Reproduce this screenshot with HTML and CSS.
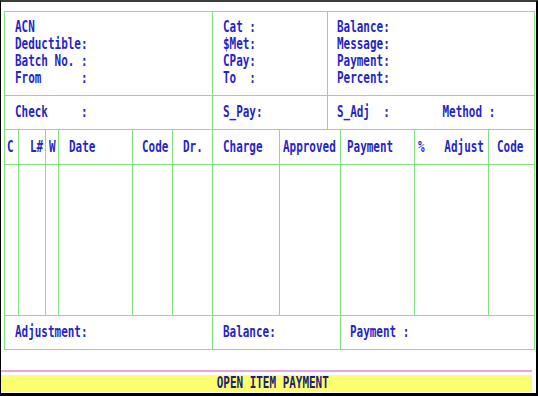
FILE: index.html
```html
<!DOCTYPE html>
<html lang="en">
<head>
    <meta charset="UTF-8">
    <meta name="viewport" content="width=device-width, initial-scale=1.0">
    <title>Open Item Payment</title>
    <link rel="stylesheet" href="styles.css">
</head>
<body>
    <div class="screen">
        <div class="form">
            <div class="head">
                <div class="fields">
                    <span class="t">ACN</span>
                    <span class="t">Deductible:</span>
                    <span class="t">Batch No. :</span>
                    <span class="t">From      :</span>
                </div>
                <div class="fields mid bl">
                    <span class="t">Cat :</span>
                    <span class="t">$Met:</span>
                    <span class="t">CPay:</span>
                    <span class="t">To  :</span>
                </div>
                <div class="fields right bl">
                    <span class="t">Balance:</span>
                    <span class="t">Message:</span>
                    <span class="t">Payment:</span>
                    <span class="t">Percent:</span>
                </div>
                <div class="line bt"><span class="t">Check     :</span></div>
                <div class="line mid bl bt"><span class="t">S_Pay:</span></div>
                <div class="line right bl bt"><span class="t">S_Adj  :        Method :</span></div>
            </div>

            <div class="table">
                <div class="th"><span class="t">C</span></div>
                <div class="th bl"><span class="t">L#</span></div>
                <div class="th bl"><span class="t">W</span></div>
                <div class="th bl"><span class="t">Date</span></div>
                <div class="th bl"><span class="t">Code</span></div>
                <div class="th bl"><span class="t">Dr.</span></div>
                <div class="th bl"><span class="t">Charge</span></div>
                <div class="th bl"><span class="t">Approved</span></div>
                <div class="th bl"><span class="t">Payment</span></div>
                <div class="th bl"><span class="t">%   Adjust</span></div>
                <div class="th bl"><span class="t">Code</span></div>

                <div class="td"></div>
                <div class="td bl"></div>
                <div class="td bl"></div>
                <div class="td bl"></div>
                <div class="td bl"></div>
                <div class="td bl"></div>
                <div class="td bl"></div>
                <div class="td bl"></div>
                <div class="td bl"></div>
                <div class="td bl"></div>
                <div class="td bl"></div>
            </div>

            <div class="totals">
                <div class="line"><span class="t">Adjustment:</span></div>
                <div class="line mid bl"><span class="t">Balance:</span></div>
                <div class="line pay bl"><span class="t">Payment :</span></div>
            </div>
        </div>

        <div class="rule"></div>
        <div class="title"><span class="t">OPEN ITEM PAYMENT</span></div>
    </div>
</body>
</html>
```

FILE: styles.css
```css
* {
    box-sizing: border-box;
}
body {
    margin: 0;
    background-color: white;
    font-family: "DejaVu Sans Mono", "Liberation Mono", monospace;
    font-weight: bold;
    font-size: 15px;
    line-height: 17px;
    color: #2626c6;
}
.screen {
    width: 538px;
    height: 396px;
    border-top: 2px solid #3c3c3c;
    border-left: 1px solid #000;
    border-right: 2px solid #000;
    border-bottom: 3px solid #000;
    padding-top: 9px;
}
.form {
    width: 531px;
    margin: 0 1px 0 3px;
    border: 1px solid #84e484;
}
.t {
    display: inline-block;
    white-space: pre;
    transform: scaleX(.73);
    transform-origin: 0 50%;
}
.bl { border-left: 1px solid #84e484; }
.bt { border-top: 1px solid #84e484; }

.head {
    display: grid;
    grid-template-columns: 207px 115px 207px;
    grid-template-rows: 83px 34px;
}
.fields {
    display: flex;
    flex-direction: column;
    padding: 7px 0 0 10px;
}
.fields .t {
    width: max-content;
}
.line {
    display: flex;
    align-items: center;
    padding-left: 10px;
}
.mid { padding-left: 10px; }
.right { padding-left: 9px; }

.table {
    display: grid;
    grid-template-columns: 13px 27px 13px 74px 40px 40px 67px 61px 74px 74px 46px;
    grid-template-rows: 34px 151px;
    border-top: 1px solid #84e484;
}
.th {
    display: flex;
    align-items: center;
    white-space: nowrap;
}
.th:nth-child(1) { padding-left: 2px; }
.th:nth-child(2) { padding-left: 11px; }
.th:nth-child(3) { padding-left: 3px; }
.th:nth-child(4) { padding-left: 10px; }
.th:nth-child(5) { padding-left: 9px; }
.th:nth-child(6) { padding-left: 10px; }
.th:nth-child(7) { padding-left: 10px; }
.th:nth-child(8) { padding-left: 3px; }
.th:nth-child(9) { padding-left: 6px; }
.th:nth-child(10) { padding-left: 3px; }
.th:nth-child(11) { padding-left: 8px; }
.td {
    border-top: 1px solid #84e484;
}

.totals {
    display: grid;
    grid-template-columns: 207px 128px 194px;
    height: 34px;
    border-top: 1px solid #84e484;
}
.pay { padding-left: 9px; }

.rule {
    width: 531px;
    height: 2px;
    margin-top: 20px;
    background-color: #dfa9e6;
}
.title {
    width: 531px;
    height: 17px;
    margin-top: 3px;
    padding-left: 13px;
    background-color: #fdfd70;
    color: #1e1e78;
    text-align: center;
    line-height: 17px;
}
.title .t {
    transform-origin: 50% 50%;
}
```
